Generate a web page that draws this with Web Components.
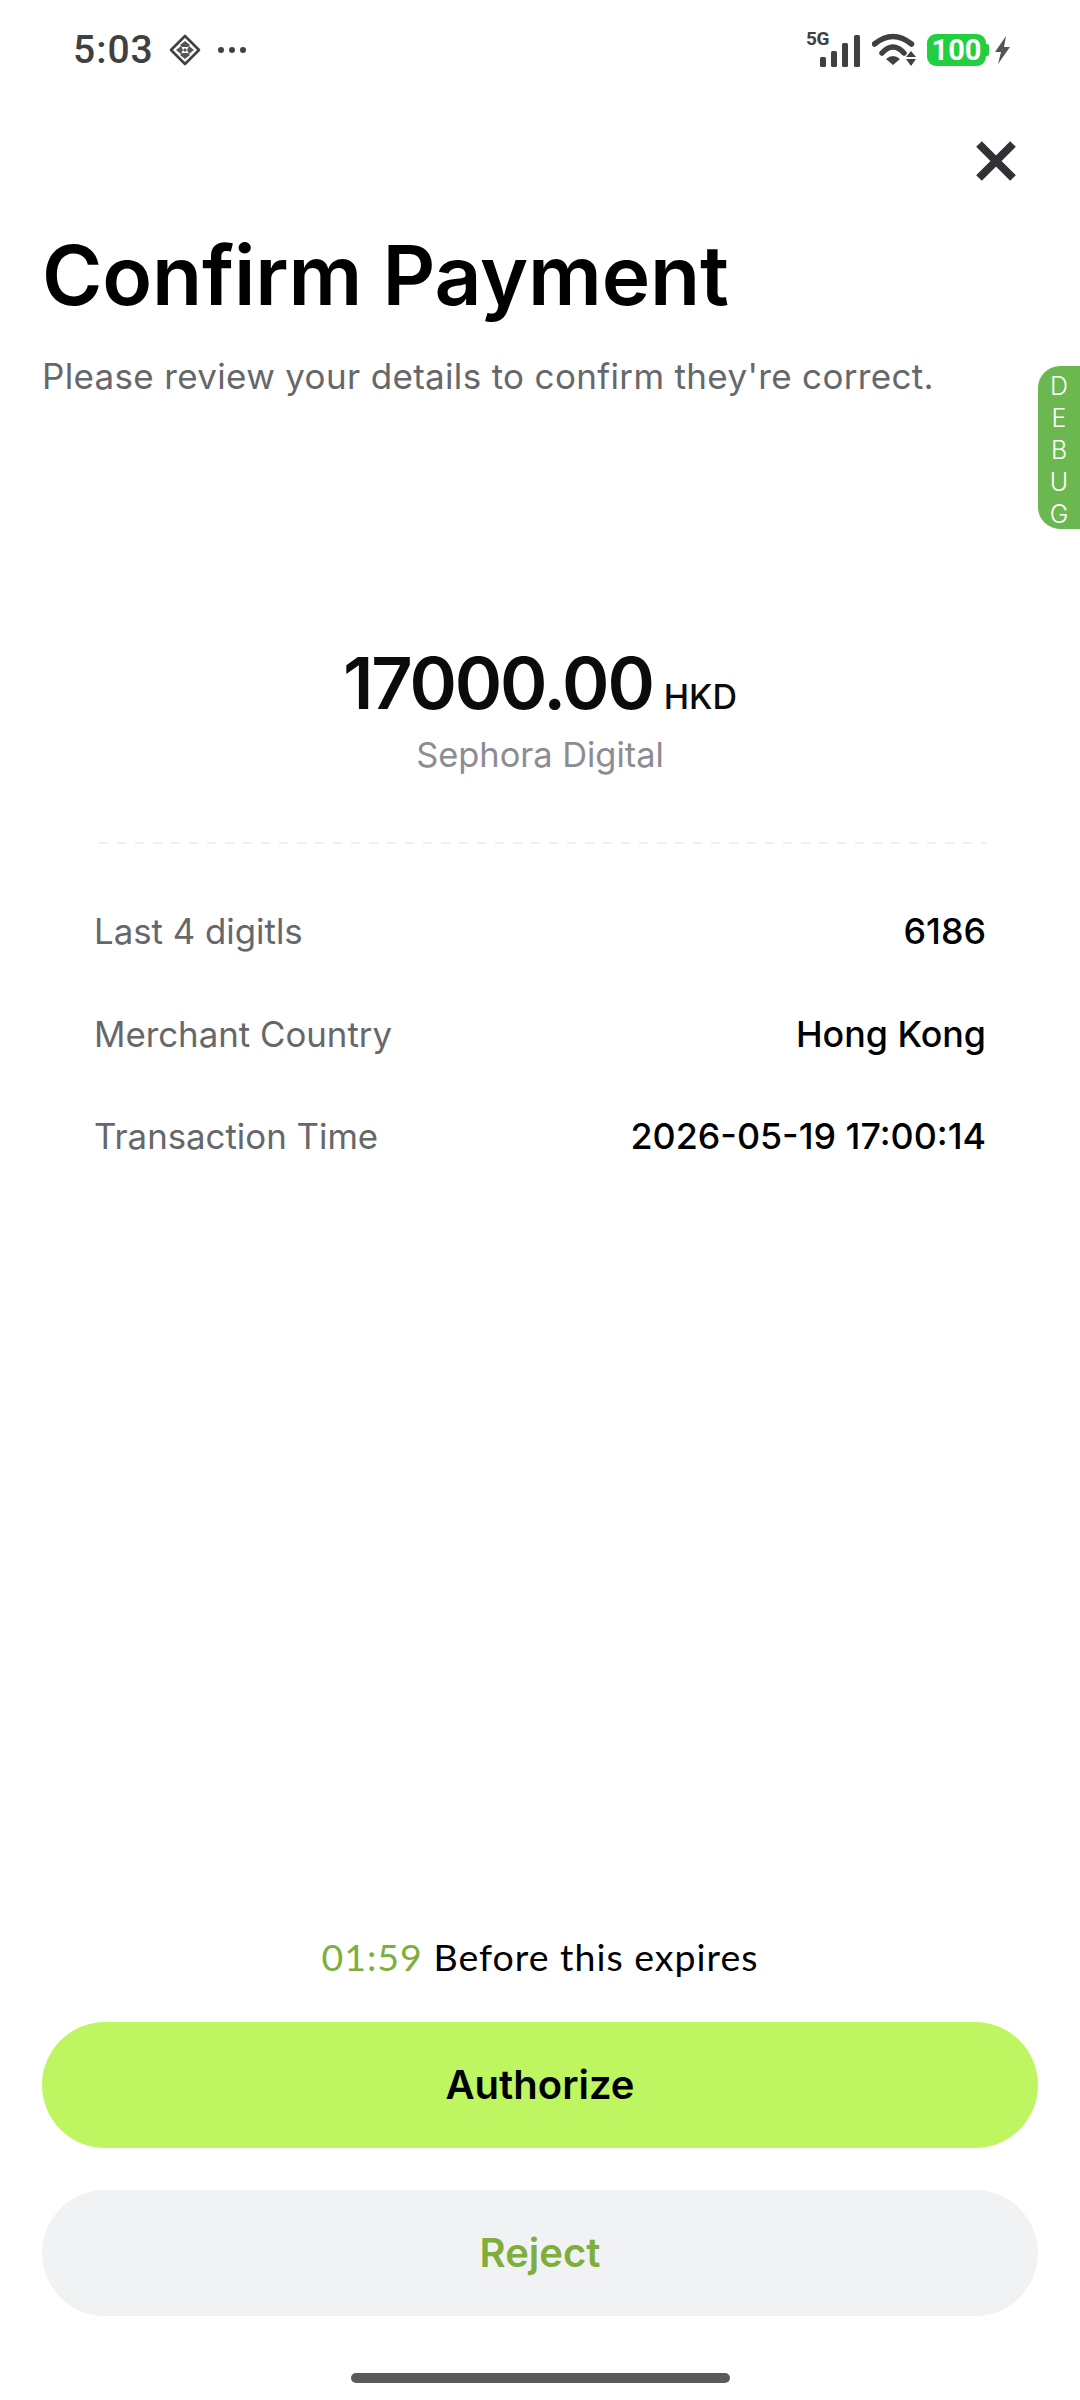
<!DOCTYPE html>
<html lang="en">
<head>
<meta charset="utf-8">
<title>Confirm Payment</title>
<style>
  html, body { margin: 0; padding: 0; background: #fff; }
  body { font-family: Inter, "Liberation Sans", sans-serif; }
</style>
</head>
<body>
<pay-screen>
  <status-bar slot="top"></status-bar>
  <confirm-header slot="top" title="Confirm Payment" subtitle="Please review your details to confirm they're correct."></confirm-header>
  <amount-summary slot="top" amount="17000.00" currency="HKD" merchant="Sephora Digital"></amount-summary>
  <detail-row slot="top" label="Last 4 digitls" value="6186"></detail-row>
  <detail-row slot="top" label="Merchant Country" value="Hong Kong"></detail-row>
  <detail-row slot="top" label="Transaction Time" value="2026-05-19 17:00:14"></detail-row>

  <expiry-note slot="bottom" time="01:59">Before this expires</expiry-note>
  <pay-button slot="bottom" kind="primary">Authorize</pay-button>
  <pay-button slot="bottom" kind="secondary">Reject</pay-button>
  <home-bar slot="bottom"></home-bar>

  <debug-tab slot="over"></debug-tab>
</pay-screen>

<script>
class PayScreen extends HTMLElement {
    constructor() {
        super();
        this.attachShadow({ mode: 'open' }).innerHTML = `
            <style>
                :host {
                    display: flex;
                    flex-direction: column;
                    justify-content: space-between;
                    position: relative;
                    width: 1080px;
                    height: 2400px;
                    overflow: hidden;
                    background: #fff;
                }
                .top, .bottom { display: flex; flex-direction: column; }
            </style>
            <div class="top"><slot name="top"></slot></div>
            <div class="bottom"><slot name="bottom"></slot></div>
            <slot name="over"></slot>
        `;
    }
}

class StatusBar extends HTMLElement {
    constructor() {
        super();
        this.attachShadow({ mode: 'open' }).innerHTML = `
            <style>
                :host {
                    display: flex;
                    align-items: center;
                    justify-content: space-between;
                    height: 100px;
                    padding: 0 70px 0 73px;
                    box-sizing: border-box;
                    color: #404040;
                }
                .left, .right { display: flex; align-items: center; }
                .time { font: 500 39px/1 Roboto, sans-serif; letter-spacing: 1px; }
                .diamond { margin-left: 15px; }
                .dots { margin-left: 16px; }
                svg { display: block; }
                .signal { position: relative; width: 54px; height: 36px; }
                .five { position: absolute; left: 0; top: -3px; font: 700 19px/1 Roboto, sans-serif; letter-spacing: -0.5px; }
                .wifi { margin-left: 12px; }
                .battery {
                    position: relative;
                    margin-left: 11px;
                    width: 59px;
                    height: 32px;
                    border-radius: 9px;
                    background: #22cf3f;
                    color: #fff;
                    font: 700 29px/32px Roboto, sans-serif;
                    text-align: center;
                }
                .battery::after {
                    content: "";
                    position: absolute;
                    right: -3px;
                    top: 10px;
                    width: 3px;
                    height: 12px;
                    border-radius: 0 2px 2px 0;
                    background: #22cf3f;
                }
                .bolt { margin-left: 9px; }
            </style>
            <div class="left">
                <span class="time">5:03</span>
                <svg class="diamond" width="32" height="32" viewBox="0 0 32 32">
                    <path d="M16 2 L30 16 L16 30 L2 16 Z" fill="none" stroke="#404040" stroke-width="2.6" stroke-linejoin="round"/>
                    <path d="M11 11 L16 7 L21 11 L19 13 L13 13 Z M11 21 L16 25 L21 21 L19 19 L13 19 Z M7 16 L12 12 L14 16 L12 20 Z M25 16 L20 12 L18 16 L20 20 Z M16 14 L18 16 L16 18 L14 16 Z" fill="#555"/>
                </svg>
                <svg class="dots" width="30" height="8" viewBox="0 0 30 8">
                    <circle cx="4" cy="4" r="3" fill="#404040"/>
                    <circle cx="15" cy="4" r="3" fill="#404040"/>
                    <circle cx="26" cy="4" r="3" fill="#404040"/>
                </svg>
            </div>
            <div class="right">
                <div class="signal">
                    <span class="five">5G</span>
                    <svg width="54" height="36" viewBox="0 0 54 36">
                        <rect x="14" y="25" width="6" height="10" rx="1.5" fill="#404040"/>
                        <rect x="25" y="19" width="6" height="16" rx="1.5" fill="#404040"/>
                        <rect x="36" y="11" width="6" height="24" rx="1.5" fill="#404040"/>
                        <rect x="48" y="3" width="6" height="32" rx="1.5" fill="#404040"/>
                    </svg>
                </div>
                <svg class="wifi" width="44" height="34" viewBox="0 0 44 34">
                    <path d="M2.5 11 Q21 -4 39.5 11" fill="none" stroke="#404040" stroke-width="5.5" stroke-linecap="round"/>
                    <path d="M10 20 Q21 8 32 20" fill="none" stroke="#404040" stroke-width="5.5" stroke-linecap="round"/>
                    <path d="M14 26 Q21 20 28 26 L21 32 Z" fill="#404040"/>
                    <path d="M39 18 L44 24 L34 24 Z M39 33 L44 26 L34 26 Z" fill="#404040"/>
                </svg>
                <div class="battery">100</div>
                <svg class="bolt" width="15" height="28" viewBox="0 0 15 28">
                    <path d="M11 0 L0 16 L6 16 L3 28 L15 11 L9 11 Z" fill="#555"/>
                </svg>
            </div>
        `;
    }
}

class ConfirmHeader extends HTMLElement {
    constructor() {
        super();
        this.attachShadow({ mode: 'open' });
    }

    connectedCallback() {
        this.shadowRoot.innerHTML = `
            <style>
                :host { display: block; padding: 40px 42px 0; }
                .close { display: flex; justify-content: flex-end; margin-right: 21px; height: 40px; }
                .close svg { display: block; }
                h1 {
                    margin: 46px 0 0;
                    font: 600 82px/100px Inter, sans-serif;
                    letter-spacing: -0.2px;
                    color: #000;
                }
                p {
                    margin: 29px 0 0;
                    font: 400 35px/42px Inter, sans-serif;
                    letter-spacing: 0.33px;
                    color: #66676b;
                }
            </style>
            <div class="close">
                <svg width="42" height="42" viewBox="0 0 42 42">
                    <path d="M4 4 L38 38 M38 4 L4 38" stroke="#313236" stroke-width="8" fill="none"/>
                </svg>
            </div>
            <h1>${this.getAttribute('title')}</h1>
            <p>${this.getAttribute('subtitle')}</p>
        `;
    }
}

class AmountSummary extends HTMLElement {
    constructor() {
        super();
        this.attachShadow({ mode: 'open' });
    }

    connectedCallback() {
        this.shadowRoot.innerHTML = `
            <style>
                :host {
                    display: block;
                    margin: 243px 94px 36px;
                    padding-bottom: 68px;
                    text-align: center;
                    background-image: linear-gradient(to right, #f0f0f1 50%, transparent 50%);
                    background-size: 18px 2px;
                    background-repeat: repeat-x;
                    background-position: bottom;
                }
                .amount { font: 600 72px/86px Inter, sans-serif; letter-spacing: -2.2px; color: #0a0c0b; }
                .currency { font: 500 34px/1 Inter, sans-serif; margin-left: 11px; letter-spacing: 0; color: #0a0c0b; }
                .merchant { margin-top: 8px; font: 400 34.4px/42px Inter, sans-serif; color: #8b8d92; }
            </style>
            <div><span class="amount">${this.getAttribute('amount')}</span><span class="currency">${this.getAttribute('currency')}</span></div>
            <div class="merchant">${this.getAttribute('merchant')}</div>
        `;
    }
}

class DetailRow extends HTMLElement {
    constructor() {
        super();
        this.attachShadow({ mode: 'open' });
    }

    connectedCallback() {
        this.shadowRoot.innerHTML = `
            <style>
                :host {
                    display: flex;
                    justify-content: space-between;
                    align-items: center;
                    margin: 0 94px;
                    height: 102.5px;
                }
                .label { color: #66676b; font-weight: 400; font-size: 34.8px; }
                .value { color: #000; font-weight: 500; font-size: 35.8px; }
            </style>
            <span class="label">${this.getAttribute('label')}</span>
            <span class="value">${this.getAttribute('value')}</span>
        `;
    }
}

class ExpiryNote extends HTMLElement {
    constructor() {
        super();
        this.attachShadow({ mode: 'open' });
    }

    connectedCallback() {
        this.shadowRoot.innerHTML = `
            <style>
                :host {
                    display: block;
                    text-align: center;
                    font: 400 37.5px/44px Lato, sans-serif;
                    letter-spacing: 1px;
                    color: #000;
                    margin-bottom: 43px;
                }
                .time { color: #7fae3c; }
            </style>
            <span class="time">${this.getAttribute('time')}</span> <slot></slot>
        `;
    }
}

class PayButton extends HTMLElement {
    constructor() {
        super();
        this.attachShadow({ mode: 'open' }).innerHTML = `
            <style>
                :host {
                    display: flex;
                    align-items: center;
                    justify-content: center;
                    height: 126px;
                    margin: 0 42px;
                    border-radius: 63px;
                    font: 600 40px/1 Inter, sans-serif;
                }
                :host([kind="primary"]) { background: #bdf661; color: #000; margin-bottom: 42px; }
                :host([kind="secondary"]) { background: #f1f2f4; color: #7fae3c; }
            </style>
            <slot></slot>
        `;
    }
}

class HomeBar extends HTMLElement {
    constructor() {
        super();
        this.attachShadow({ mode: 'open' }).innerHTML = `
            <style>
                :host { display: block; padding: 57px 0 17px; }
                div { width: 379px; height: 10px; margin: 0 auto; border-radius: 5px; background: #5a5a5a; }
            </style>
            <div></div>
        `;
    }
}

class DebugTab extends HTMLElement {
    constructor() {
        super();
        this.attachShadow({ mode: 'open' }).innerHTML = `
            <style>
                :host {
                    position: absolute;
                    right: 0;
                    top: 366px;
                    width: 42px;
                    height: 163px;
                    display: flex;
                    flex-direction: column;
                    align-items: center;
                    justify-content: space-between;
                    box-sizing: border-box;
                    padding: 7px 0 1px;
                    background: #6ab84f;
                    border-radius: 22px 0 0 22px;
                    color: #fff;
                    font: 300 25px/1.1 Inter, sans-serif;
                }
            </style>
            <span>D</span><span>E</span><span>B</span><span>U</span><span>G</span>
        `;
    }
}

customElements.define('pay-screen', PayScreen);
customElements.define('status-bar', StatusBar);
customElements.define('confirm-header', ConfirmHeader);
customElements.define('amount-summary', AmountSummary);
customElements.define('detail-row', DetailRow);
customElements.define('expiry-note', ExpiryNote);
customElements.define('pay-button', PayButton);
customElements.define('home-bar', HomeBar);
customElements.define('debug-tab', DebugTab);
</script>
</body>
</html>
